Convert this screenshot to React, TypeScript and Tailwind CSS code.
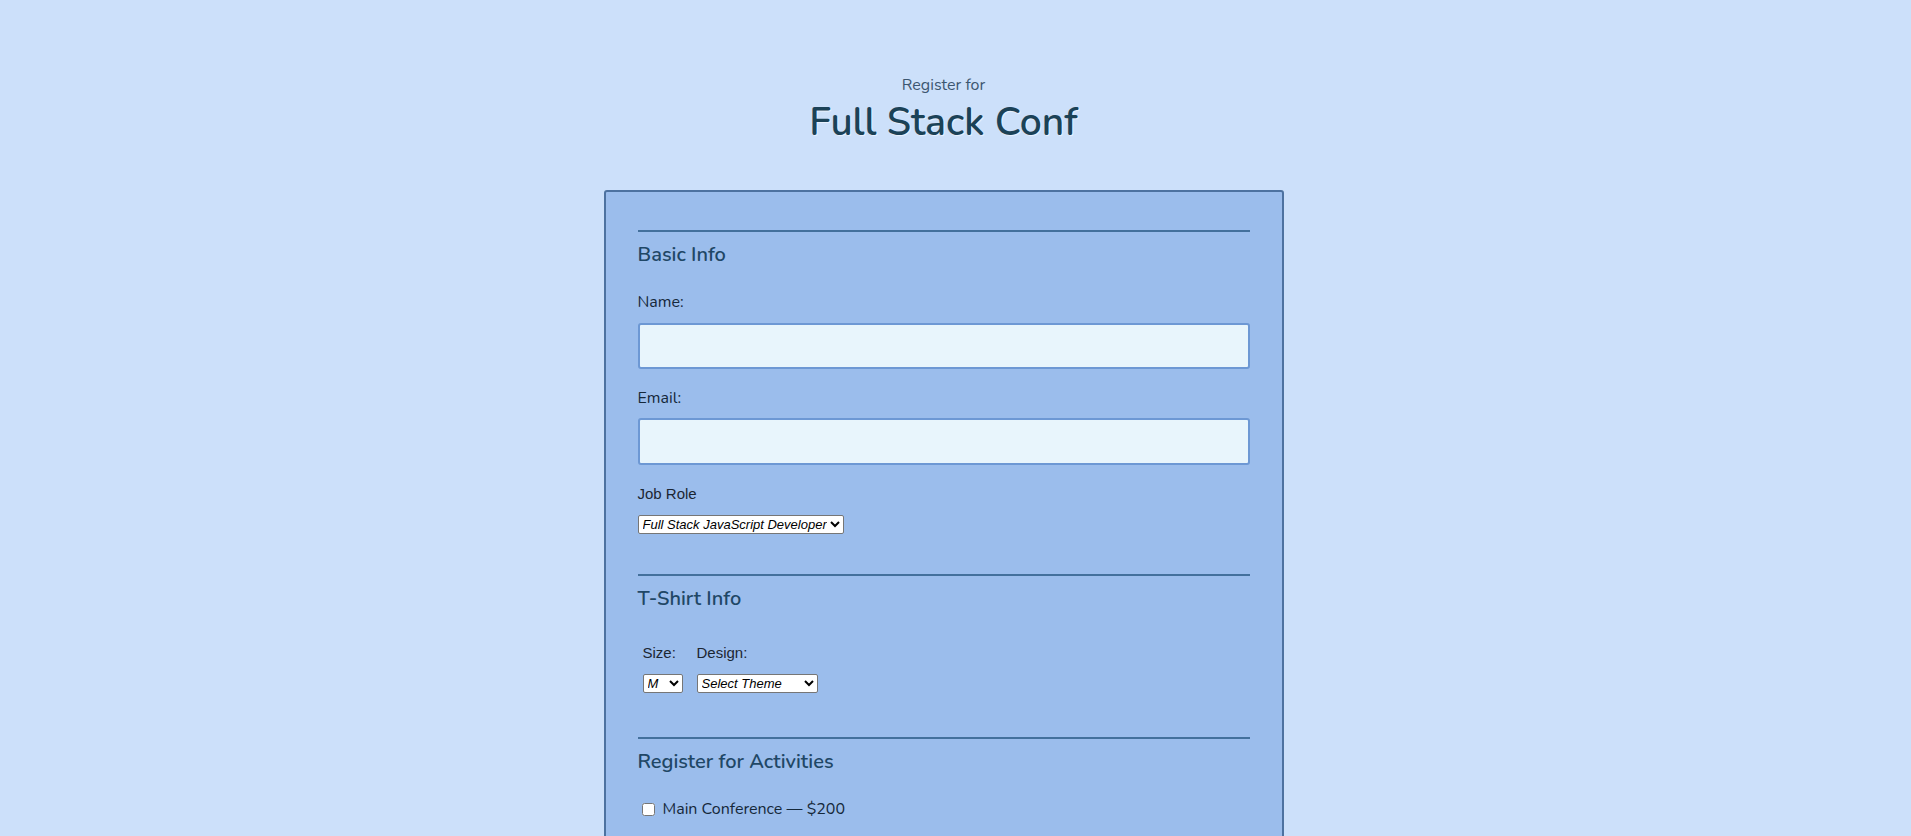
import React from "react";

const activities = [
  "Main Conference — $200",
  "JavaScript Frameworks Workshop — Tuesday 9am-12pm, $100",
  "JavaScript Libraries Workshop — Tuesday 1pm-4pm, $100",
  "Express Workshop — Tuesday 9am-12pm, $100",
  "Node.js Workshop — Tuesday 1pm-4pm, $100",
  "Build tools Workshop — Wednesday 9am-12pm, $100",
  "npm Workshop — Wednesday 1pm-4pm, $100",
];

const nunito = "font-['Nunito','Lato','Noto_Sans',sans-serif]";
const arial = "font-['Liberation_Sans',Arial,sans-serif]";

const Section: React.FC<{ title: string; children: React.ReactNode; className?: string }> = ({
  title,
  children,
  className,
}) => (
  <section className={"border-t-2 border-[#43709c] " + (className ?? "")}>
    <h2 className={`${nunito} text-[20px] leading-6 font-semibold text-[#1f4766] mt-[11px]`}>{title}</h2>
    {children}
  </section>
);

const App: React.FC = () => {
  return (
    <div className={`bg-[#cce0fa] h-screen overflow-y-scroll pr-[24px] ${nunito}`}>
      <header className="text-center pt-[75px]">
        <p className="text-[16px] leading-5 text-[#3c5670]">Register for</p>
        <h1 className="text-[39px] leading-[48px] mt-[4px] font-semibold text-[#1b4257] [text-shadow:1px_1px_1px_rgba(255,255,255,0.6)]">
          Full Stack Conf
        </h1>
      </header>

      <form className="w-[680px] mx-auto mt-[43px] mb-24 bg-[#9bbdec] border-2 border-[#4d72a0] rounded-[3px] px-8 pt-[38px] pb-10">
        <Section title="Basic Info">
          <label className="block mt-[25px] text-[16px] leading-5 text-[#15283a]">Name:</label>
          <input
            type="text"
            className="block w-full h-[46px] mt-[11px] bg-[#e8f5fc] border-2 border-[#6d98d4] rounded-[3px] outline-none px-2"
          />
          <label className="block mt-[19px] text-[16px] leading-5 text-[#15283a]">Email:</label>
          <input
            type="email"
            className="block w-full h-[47px] mt-[10px] bg-[#e8f5fc] border-2 border-[#6d98d4] rounded-[3px] outline-none px-2"
          />
          <label className={`block mt-[20px] text-[15px] leading-[18px] text-[#1b2633] ${arial}`}>Job Role</label>
          <select
            className={`block mt-[12px] h-[19px] w-[206px] bg-white border border-[#767676] rounded-[2px] text-[13px] italic text-black ${arial}`}
            defaultValue="fs"
          >
            <option value="fs">Full Stack JavaScript Developer</option>
            <option value="fe">Front End Developer</option>
            <option value="be">Back End Developer</option>
          </select>
        </Section>

        <Section title="T-Shirt Info" className="mt-[40px]">
          <div className={`flex gap-[14px] mt-[33px] pl-[5px] ${arial} text-[15px] text-[#1b2633]`}>
            <div className="flex flex-col">
              <label className="leading-[18px]">Size:</label>
              <select
                className={`mt-[12px] h-[19px] w-[40px] bg-white border border-[#767676] rounded-[2px] text-[13px] italic text-black ${arial}`}
                defaultValue="m"
              >
                <option value="s">S</option>
                <option value="m">M</option>
                <option value="l">L</option>
                <option value="xl">XL</option>
              </select>
            </div>
            <div className="flex flex-col">
              <label className="leading-[18px]">Design:</label>
              <select
                className={`mt-[12px] h-[19px] w-[121px] bg-white border border-[#767676] rounded-[2px] text-[13px] italic text-black ${arial}`}
                defaultValue=""
              >
                <option value="">Select Theme</option>
                <option value="js puns">Theme - JS Puns</option>
                <option value="heart js">Theme - I ♥ JS</option>
              </select>
            </div>
          </div>
        </Section>

        <Section title="Register for Activities" className="mt-[44px]">
          <div className="mt-[25px] pl-[4px] flex flex-col gap-[28px]">
            {activities.map((a) => (
              <label key={a} className="flex items-center gap-[8px] text-[16px] leading-5 text-[#15283a]">
                <input type="checkbox" className="w-[13px] h-[13px] m-0" />
                {a}
              </label>
            ))}
          </div>
          <p className="mt-6 text-[16px] text-[#15283a]">Total: $0</p>
        </Section>

        <Section title="Payment Info" className="mt-[40px]">
          <label className={`block mt-[20px] text-[15px] ${arial} text-[#1b2633]`}>I'm going to pay with:</label>
          <select className={`mt-2 h-[19px] bg-white border border-[#767676] rounded-[2px] text-[13px] italic ${arial}`}>
            <option>Credit Card</option>
            <option>PayPal</option>
            <option>Bitcoin</option>
          </select>
        </Section>

        <button
          type="button"
          className="mt-8 px-6 py-2 bg-[#22627e] text-white rounded-[3px] text-[16px]"
        >
          Register
        </button>
      </form>
    </div>
  );
};

export default App;
